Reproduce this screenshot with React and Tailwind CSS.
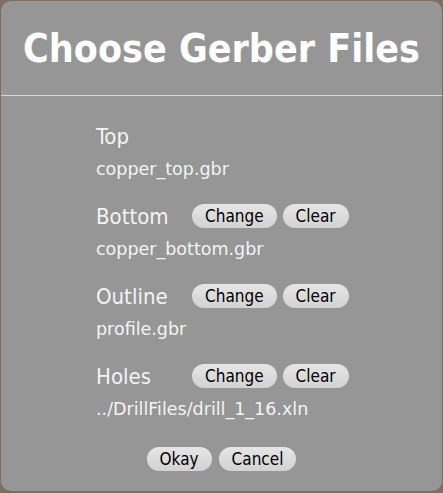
import React from 'react';

const Pill = ({ children }) => (
  <button className="h-[24px] px-[13px] rounded-full bg-gradient-to-b from-[#e6e6e6] to-[#d2d2d2] text-black text-[17px] leading-[24px]">
    {children}
  </button>
);

const Section = ({ label, file, buttons = true }) => (
  <div className="flex flex-col">
    <div className="flex items-center h-[24px]">
      <span className="w-[96px] text-[22px] text-[#f4f4f4]">{label}</span>
      {buttons && (
        <div className="flex gap-[6px]">
          <Pill>Change</Pill>
          <Pill>Clear</Pill>
        </div>
      )}
    </div>
    <div
      className="mt-[11px] text-[17.5px] leading-[20px] text-[#f4f4f4]"
      style={{ fontFamily: '"DejaVu Sans", sans-serif' }}
    >
      {file}
    </div>
  </div>
);

const App = () => {
  const files = [
    { label: 'Top', file: 'copper_top.gbr', buttons: false },
    { label: 'Bottom', file: 'copper_bottom.gbr' },
    { label: 'Outline', file: 'profile.gbr' },
    { label: 'Holes', file: '../DrillFiles/drill_1_16.xln' },
  ];

  return (
    <div
      className="w-[443px] h-[493px] bg-[#7f6d61] p-[1px] pb-[2px]"
      style={{ fontFamily: '"DejaVu Sans Condensed", "DejaVu Sans", sans-serif' }}
    >
      <div className="h-full flex flex-col bg-[#969696] rounded-[10px]">
        <div className="h-[94px] flex items-center justify-center">
          <h1 className="text-[39px] font-bold text-white leading-none">Choose Gerber Files</h1>
        </div>
        <div className="h-[1px] bg-[#d6d6d6]" />
        <div className="pl-[95px] pt-[28px] flex flex-col gap-[25px]">
          {files.map((f) => (
            <Section key={f.label} {...f} />
          ))}
        </div>
        <div className="flex justify-center gap-[7px] mt-[28px]">
          <Pill>Okay</Pill>
          <Pill>Cancel</Pill>
        </div>
      </div>
    </div>
  );
};

export default App;
